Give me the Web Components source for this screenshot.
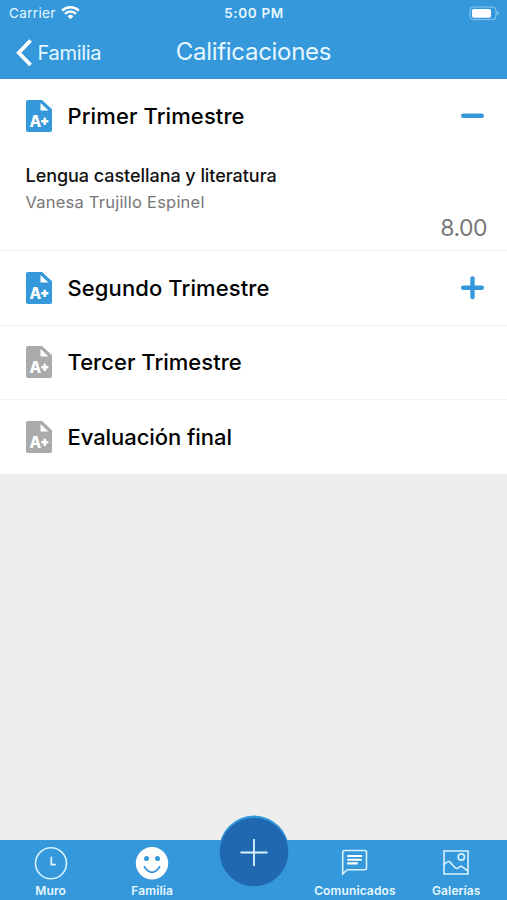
<!DOCTYPE html>
<html lang="es">
<head>
<meta charset="utf-8">
<title>Calificaciones</title>
<style>
html,body{margin:0;height:100%}
body{font-family:Inter,"Liberation Sans",sans-serif;background:#eee;overflow:hidden}
</style>
</head>
<body>
<grades-app></grades-app>
<script>
const define = (name, html, setup) => customElements.define(name, class extends HTMLElement {
  connectedCallback() {
    if (this.shadowRoot) return;
    const root = this.attachShadow({mode: 'open'});
    const t = document.createElement('template');
    t.innerHTML = html;
    root.append(t.content.cloneNode(true));
    if (setup) setup(this, root);
  }
});

define('status-bar', `
<style>
:host{display:grid;grid-template-columns:1fr auto 1fr;align-items:center;height:27px;padding:0 8px 0 9px;box-sizing:border-box;color:#e6f7ff;font-size:13.5px;line-height:27px}
.l{display:flex;align-items:center;gap:5.5px}
.l span{letter-spacing:.35px}
.l svg{margin-top:-2px}
.t{font-weight:600;letter-spacing:.65px}
svg{display:block}
.b{justify-self:end;margin-top:-1px}
</style>
<div class="l"><span>Carrier</span>
<svg width="19" height="15" viewBox="0 0 19 15" fill="none" stroke="#fff" stroke-width="2.5"><path d="M1.2 5.6a12 12 0 0 1 16.6 0M4 8.8a8 8 0 0 1 11 0"/><path d="M9.5 14.3 6.5 11.2a4.3 4.3 0 0 1 6 0z" fill="#fff" stroke="none"/></svg></div>
<div class="t">5:00 PM</div>
<svg class="b" width="30" height="15" viewBox="0 0 30 15"><rect x="1" y="1" width="26" height="12.6" rx="3.5" fill="none" stroke="#8ecbf1"/><rect x="3" y="3" width="19" height="8.7" rx="1.8" fill="#fff"/><path d="M28.2 5v4.6q1.6-.8 1.6-2.3t-1.6-2.3" fill="#8ecbf1"/></svg>`);

define('nav-bar', `
<style>
:host{display:grid;grid-template-columns:1fr auto 1fr;align-items:center;height:52px;padding:0 16px;box-sizing:border-box;color:#e6f7ff}
.back{display:flex;align-items:center;gap:4.5px;font-size:20px;letter-spacing:-.3px}
svg{display:block}
.title{font-size:24px;letter-spacing:-.3px;line-height:48px;padding-bottom:3px}
</style>
<div class="back"><svg width="17" height="28" viewBox="0 0 17 28" fill="none" stroke="#fff" stroke-width="3.8"><path d="M14.6 1.5 2.8 13.7 14.6 26"/></svg><span><slot name="back"></slot></span></div>
<div class="title"><slot></slot></div>`);

define('grade-icon', `
<style>:host{display:block;width:26px;height:32px}svg{display:block}text{font:800 15.3px Inter,"Liberation Sans",sans-serif}</style>
<svg width="26" height="32" viewBox="0 0 26 32"><path d="M2 0h14l10 9.3V30a2 2 0 0 1-2 2H2a2 2 0 0 1-2-2V2a2 2 0 0 1 2-2z" fill="currentColor"/><path d="M14.5 3v7.5h8z" fill="#fff"/><text x="3.6" y="26.7" fill="#fff">A</text><path d="M15.2 21.3h7.2M18.8 17.7v7.2" stroke="#fff" stroke-width="2.6"/></svg>`);

define('term-row', `
<style>
:host{display:block;background:#fff;border-bottom:1px solid #f0f0f0;box-sizing:border-box}
:host([last]){border-bottom:0}
.head{display:flex;align-items:center;height:73.5px;padding:0 22px 0 26px;color:#3498db}
:host([disabled]) grade-icon{color:#aaa}
.name{flex:1;margin-left:15.5px;font-size:22px;font-weight:470;color:#000;letter-spacing:.1px}
:host([disabled]) .name{letter-spacing:.02px}
:host([last]) .name{letter-spacing:-.06px}
svg{display:block}
:host([disabled]) svg{display:none}
:host([open]) .v{display:none}
</style>
<div class="head"><grade-icon></grade-icon><div class="name"></div>
<svg width="25" height="25" viewBox="0 0 25 25" stroke="currentColor" stroke-width="4.4" stroke-linecap="round"><path d="M3.2 12.8h18.6"/><path class="v" d="M12.5 3.5v18.6"/></svg></div>
<slot></slot>`, (el, root) => { root.querySelector('.name').textContent = el.getAttribute('name'); });

define('subject-grade', `
<style>
:host{display:block;height:97.5px;padding:11.5px 20px 0 25.5px;box-sizing:border-box}
.s{font-size:18px;line-height:24px;font-weight:500;color:#111;letter-spacing:-.05px}
.t{font-size:16.5px;line-height:24px;color:#777;margin-top:2px;letter-spacing:.22px}
.g{font-size:23px;line-height:28px;color:#777;text-align:right;letter-spacing:-.5px}
</style>
<div class="s"><slot name="subject"></slot></div><div class="t"><slot name="teacher"></slot></div><div class="g"><slot></slot></div>`);

const icons = {
  clock: '<circle cx="17" cy="17.3" r="15.5"/><path d="M17.3 10.8v7.8h4.6" stroke-width="1.8"/>',
  smile: '<circle cx="17" cy="17.3" r="16.2" fill="#fff" stroke="none"/><g fill="#3498db" stroke="none"><circle cx="11.5" cy="12.6" r="2.5"/><circle cx="22.5" cy="12.6" r="2.5"/></g><path d="M9 20.3q8 12 16 0" stroke="#3498db" stroke-width="1.8"/>',
  chat: '<path d="M4.7 28V6q0-1.5 1.5-1.5H26.7q1.8 0 1.8 1.5v16q0 1.7-1.8 1.7H9.2z"/><path d="M9.2 10h15M9.2 13.7H23.7M9.2 17.4H19.7" stroke="#fff" stroke-width="2.1"/>',
  image: '<path d="M5 5h24v23H5z"/><circle cx="22.3" cy="11" r="3.1"/><path d="M5 18.7q4-4.2 5.5-3l5.7 6q2 1.5 3.8-.2 2.5-2.5 4 0L29 25"/>'
};
define('tab-item', `
<style>
:host{display:flex;flex-direction:column;align-items:center;padding-top:6px;color:#e6f7ff;font-size:12px;font-weight:600;line-height:16px;letter-spacing:.12px;white-space:nowrap}
svg{display:block;margin-bottom:3px}
</style>
<svg width="34" height="34" viewBox="0 0 34 34" fill="none" stroke="#d9f3ff" stroke-width="1.6"></svg><span><slot></slot></span>`,
(el, root) => { root.querySelector('svg').innerHTML = icons[el.getAttribute('icon')]; });

define('add-button', `
<style>
:host{display:block;position:absolute;left:50%;top:-25px;width:70px;height:72px;transform:translateX(-50%)}
svg{display:block}
</style>
<svg width="70" height="72" viewBox="0 0 70 72"><circle cx="35" cy="35.5" r="35" fill="#3498db"/><circle cx="35" cy="37" r="34.3" fill="#2069b1"/><path d="M21.5 37.5h27M35 24v27" stroke="#d9f3ff" stroke-width="1.8"/></svg>`);

define('tab-bar', `
<style>
:host{display:grid;grid-template-columns:repeat(5,1fr);height:60px;background:#3498db;position:relative}
</style>
<tab-item icon="clock">Muro</tab-item><tab-item icon="smile">Familia</tab-item><i></i><tab-item icon="chat">Comunicados</tab-item><tab-item icon="image">Galerías</tab-item>
<add-button></add-button>`);

define('grades-app', `
<style>
:host{display:flex;flex-direction:column;width:507px;height:900px;background:#eee}
header{background:#3498db;height:79px}
main{flex:1}
</style>
<header><status-bar></status-bar><nav-bar><span slot="back">Familia</span>Calificaciones</nav-bar></header>
<main>
<term-row open name="Primer Trimestre"><subject-grade><span slot="subject">Lengua castellana y literatura</span><span slot="teacher">Vanesa Trujillo Espinel</span>8.00</subject-grade></term-row>
<term-row name="Segundo Trimestre"></term-row>
<term-row disabled name="Tercer Trimestre"></term-row>
<term-row disabled last name="Evaluación final"></term-row>
</main>
<tab-bar></tab-bar>`);
</script>
</body>
</html>
